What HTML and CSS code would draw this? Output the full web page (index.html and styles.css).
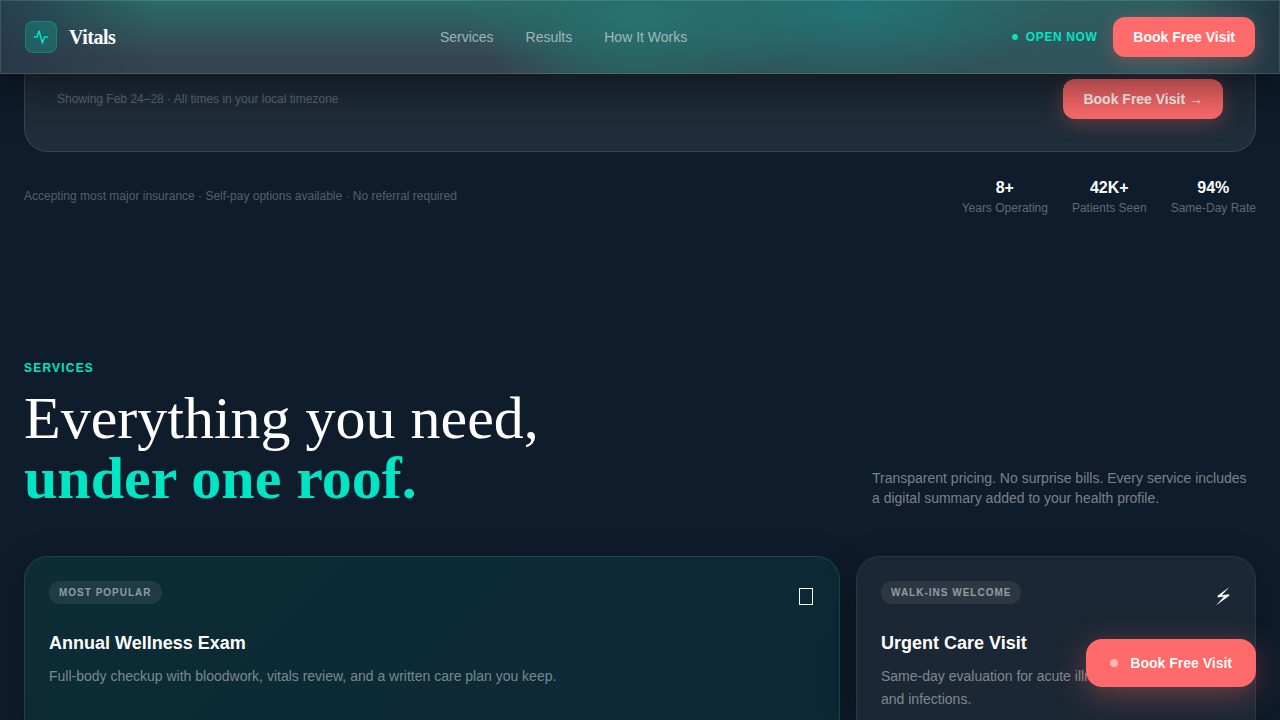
FILE: index.html
```
<!DOCTYPE html>
<html lang="en">
<head>
  <meta charset="UTF-8" />
  <meta name="viewport" content="width=device-width, initial-scale=1.0" />
  <title>Vitals</title>
  <link rel="stylesheet" href="styles.css">
</head>
<body>
  <header class="navbar">
    <a class="brand" href="#">
      <span class="brand-mark">
        <svg width="16" height="16" viewBox="0 0 16 16" fill="none" stroke="currentColor" stroke-width="1.5" stroke-linecap="round" stroke-linejoin="round" aria-hidden="true">
          <path d="M1.5 8H4L6 2L9.5 14L11.5 8H14.5" />
        </svg>
      </span>
      <span class="brand-name">Vitals</span>
    </a>
    <nav class="nav-links">
      <a href="#services">Services</a>
      <a href="#results">Results</a>
      <a href="#how">How It Works</a>
    </nav>
    <div class="nav-actions">
      <span class="status"><span class="status-dot"></span>Open Now</span>
      <button class="btn" type="button">Book Free Visit</button>
    </div>
  </header>

  <main class="page">
    <section class="panel">
      <p class="note">Showing Feb 24–28 · All times in your local timezone</p>
      <button class="btn" type="button">Book Free Visit →</button>
    </section>

    <section class="trust">
      <p class="note">Accepting most major insurance · Self-pay options available · No referral required</p>
      <dl class="stats">
        <div class="stat"><dd>8+</dd><dt>Years Operating</dt></div>
        <div class="stat"><dd>42K+</dd><dt>Patients Seen</dt></div>
        <div class="stat"><dd>94%</dd><dt>Same-Day Rate</dt></div>
      </dl>
    </section>

    <section class="services" id="services">
      <div class="section-head">
        <div>
          <p class="eyebrow">Services</p>
          <h2>Everything you need,<br><strong>under one roof.</strong></h2>
        </div>
        <p class="intro">Transparent pricing. No surprise bills. Every service includes a digital summary added to your health profile.</p>
      </div>

      <div class="cards">
        <article class="card card-featured">
          <div class="card-top">
            <span class="badge">Most Popular</span>
            <svg class="card-icon" viewBox="0 0 16 32" fill="none" stroke="currentColor" aria-hidden="true">
              <rect x="0.5" y="7.5" width="13" height="16" />
            </svg>
          </div>
          <h3>Annual Wellness Exam</h3>
          <p>Full-body checkup with bloodwork, vitals review, and a written care plan you keep.</p>
        </article>
        <article class="card">
          <div class="card-top">
            <span class="badge">Walk-ins Welcome</span>
            <svg class="card-icon" viewBox="0 0 16 32" fill="currentColor" aria-hidden="true">
              <path d="M14.5 6L2.3 15L3 16.4L9 15.6L1 24.5L14.5 14.6L13.8 13.2L6.8 14.2Z" />
            </svg>
          </div>
          <h3>Urgent Care Visit</h3>
          <p>Same-day evaluation for acute illness, minor injuries, and infections.</p>
        </article>
      </div>
    </section>
  </main>

  <button class="btn floating-btn" type="button"><span class="pulse"></span>Book Free Visit</button>
</body>
</html>
```
FILE: styles.css
```
* { box-sizing: border-box; margin: 0; padding: 0; }

body {
  display: flex;
  flex-direction: column;
  min-height: 100vh;
  font-family: "Liberation Sans", Arial, sans-serif;
  font-size: 14px;
  line-height: 20px;
  color: #fff;
  background: #0f1c2c;
}

a { color: inherit; text-decoration: none; }

.navbar {
  position: sticky;
  top: 0;
  z-index: 10;
  display: flex;
  align-items: center;
  justify-content: space-between;
  padding: 16px 24px;
  border: 1px solid rgba(255, 255, 255, 0.12);
  background:
    linear-gradient(90deg, rgba(36, 54, 70, 0.8), transparent 12%, transparent 92%, rgba(32, 52, 66, 0.9)),
    radial-gradient(ellipse 14% 110% at 50% 20%, #27736f, transparent),
    radial-gradient(ellipse 16% 100% at 67% 10%, #237376, transparent),
    linear-gradient(90deg, transparent 38%, rgba(42, 92, 94, 0.7) 48%, rgba(46, 90, 94, 0.7)),
    linear-gradient(#2b6b69, #33505a 55%, #364350 80%);
  background-origin: border-box;
  box-shadow: 0 12px 48px rgba(0, 0, 0, 0.55);
}

.brand {
  display: flex;
  align-items: center;
  gap: 12px;
}

.brand-mark {
  display: flex;
  align-items: center;
  justify-content: center;
  width: 32px;
  height: 32px;
  border: 1px solid rgba(0, 229, 195, 0.25);
  border-radius: 8px;
  color: #00e5c3;
  background: rgba(0, 229, 195, 0.2);
}

.brand-name {
  font-family: "Liberation Serif", "Times New Roman", serif;
  font-size: 20px;
  font-weight: 700;
  letter-spacing: -0.5px;
}

.nav-links {
  display: flex;
  gap: 32px;
  color: rgba(255, 255, 255, 0.55);
}

.nav-actions {
  display: flex;
  align-items: center;
  gap: 16px;
}

.status {
  display: flex;
  align-items: center;
  gap: 8px;
  font-size: 12px;
  font-weight: 700;
  letter-spacing: 0.6px;
  text-transform: uppercase;
  color: #00e5c3;
}

.status-dot {
  width: 6px;
  height: 6px;
  border-radius: 50%;
  background: #00e5c3;
}

.btn {
  padding: 10px 20px;
  border: none;
  border-radius: 12px;
  font: inherit;
  font-weight: 700;
  color: #fff;
  background: #ff6b6b;
  box-shadow: 0 4px 20px rgba(255, 107, 107, 0.3);
  cursor: pointer;
}

.page {
  flex: 1;
  display: flex;
  flex-direction: column;
  padding: 0 24px;
}

.panel {
  display: flex;
  align-items: center;
  justify-content: space-between;
  padding: 5px 32px 32px;
  border: 1px solid #384653;
  border-top: none;
  border-radius: 0 0 24px 24px;
  background: #202d3a;
}

.note {
  font-size: 12px;
  color: rgba(255, 255, 255, 0.3);
}

.trust {
  display: flex;
  align-items: center;
  justify-content: space-between;
  margin-top: 24px;
}

.stats {
  display: flex;
  gap: 24px;
  text-align: center;
}

.stat dd {
  font-size: 16px;
  font-weight: 700;
  line-height: 24px;
}

.stat dt {
  font-size: 12px;
  line-height: 16px;
  color: rgba(255, 255, 255, 0.35);
}

.services {
  flex: 1;
  display: flex;
  flex-direction: column;
  margin-top: 144px;
}

.section-head {
  display: flex;
  align-items: flex-end;
  justify-content: space-between;
  margin-bottom: 48px;
}

.eyebrow {
  margin-bottom: 12px;
  font-size: 12px;
  font-weight: 700;
  line-height: 16px;
  letter-spacing: 1.2px;
  text-transform: uppercase;
  color: #00e5c3;
}

h2 {
  font-family: "Liberation Serif", "Times New Roman", serif;
  font-size: 60px;
  font-weight: 400;
  line-height: 60px;
}

h2 strong { color: #00e5c3; }

.intro {
  max-width: 384px;
  color: rgba(255, 255, 255, 0.45);
}

.cards {
  flex: 1;
  display: grid;
  grid-template-columns: repeat(3, 1fr);
  gap: 16px;
}

.card {
  padding: 24px 24px 0;
  border: 1px solid #2b3743;
  border-bottom: none;
  border-radius: 24px 24px 0 0;
  background: #1b2734;
  box-shadow: 0 8px 32px rgba(0, 0, 0, 0.3);
}

.card-featured {
  grid-column: span 2;
  border-color: #12494d;
  background: linear-gradient(135deg, #0d2c35, #0c2835);
}

.card-top {
  display: flex;
  align-items: flex-start;
  justify-content: space-between;
  margin-bottom: 16px;
}

.badge {
  padding: 4px 10px;
  border-radius: 12px;
  font-size: 10px;
  font-weight: 700;
  line-height: 15px;
  letter-spacing: 1px;
  text-transform: uppercase;
  color: rgba(255, 255, 255, 0.5);
  background: rgba(255, 255, 255, 0.08);
}

.card-icon {
  width: 16px;
  height: 32px;
}

.card h3 {
  margin-bottom: 8px;
  font-size: 18px;
  line-height: 28px;
}

.card p {
  line-height: 23px;
  color: rgba(255, 255, 255, 0.45);
}

.floating-btn {
  position: fixed;
  right: 24px;
  bottom: 33px;
  z-index: 20;
  display: flex;
  align-items: center;
  gap: 12px;
  padding: 14px 24px;
  border-radius: 16px;
  box-shadow: 0 8px 32px rgba(255, 107, 107, 0.35);
}

.pulse {
  width: 8px;
  height: 8px;
  border-radius: 50%;
  background: rgba(255, 255, 255, 0.5);
}
```
